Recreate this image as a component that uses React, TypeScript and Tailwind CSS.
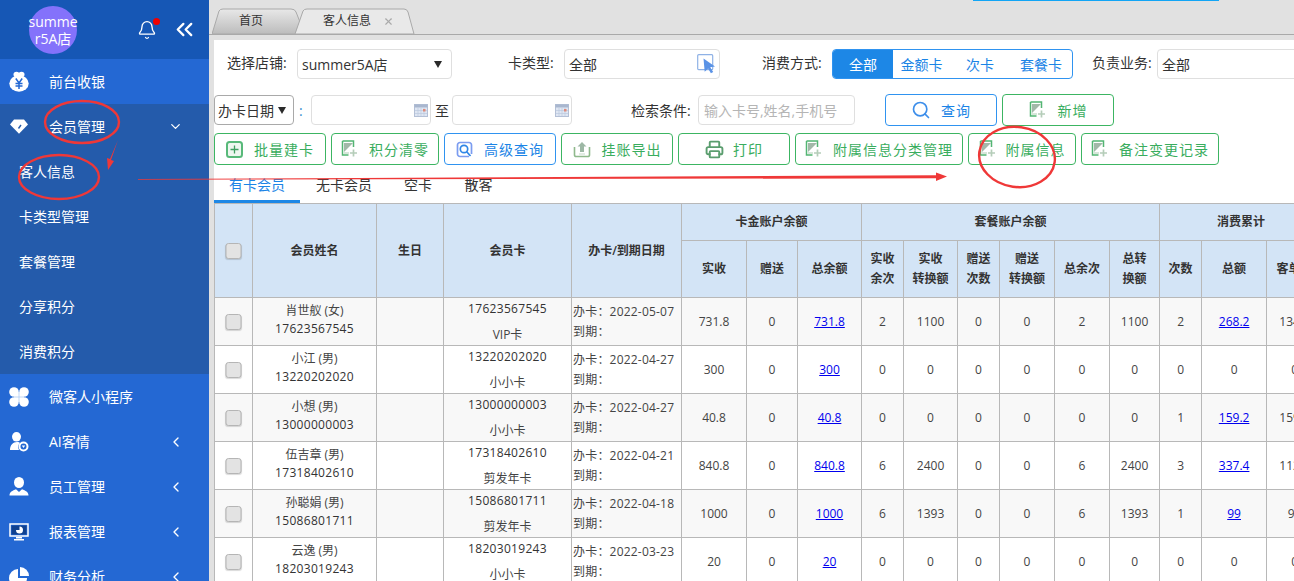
import React from "react";
import { Search, Printer, X, ChevronDown, ChevronLeft, Bell, ChevronsLeft } from "lucide-react";

const font = "font-['Open_Sans','Noto_Sans_CJK_SC',sans-serif]";

function DocPlus() {
  return (
    <svg width="17" height="18" viewBox="0 0 17 18" className="shrink-0">
      <path d="M1.500 1h11v6M1.500 1v14h6" fill="none" stroke="#53b573" strokeWidth="1.500" />
      <path d="M3 3h9L3 12z" fill="#a3b8a9" />
      <path d="M3 12v2h5v-2z" fill="#d7e6da" />
      <path d="M12.500 9.500v7M9 13h7" stroke="#b5cdb9" strokeWidth="1.700" />
    </svg>
  );
}

function PlusBox() {
  return (
    <svg width="17" height="17" viewBox="0 0 17 17" className="shrink-0">
      <rect x="1" y="1" width="15" height="15" rx="2.500" fill="#eef7f0" stroke="#58b97a" strokeWidth="2" />
      <path d="M8.500 4.500v8M4.500 8.500h8" stroke="#3f9e60" strokeWidth="1.300" />
    </svg>
  );
}

function Query() {
  return (
    <svg width="17" height="17" viewBox="0 0 17 17" className="shrink-0">
      <path d="M13 15.500H4A2.500 2.500 0 0 1 1.500 13V4A2.500 2.500 0 0 1 4 1.500h9A2.500 2.500 0 0 1 15.500 4v9" fill="none" stroke="#7b9cf0" strokeWidth="1.700" />
      <circle cx="8" cy="8" r="3.700" fill="none" stroke="#2f86e6" strokeWidth="1.700" />
      <path d="M10.500 10.500l4 4.500" stroke="#2f86e6" strokeWidth="1.700" />
    </svg>
  );
}

function Upload() {
  return (
    <svg width="18" height="17" viewBox="0 0 18 17" className="shrink-0">
      <path d="M1.500 6v8a1.500 1.500 0 0 0 1.500 1.500h12a1.500 1.500 0 0 0 1.500-1.500V6" fill="none" stroke="#8fb98c" strokeWidth="1.600" />
      <path d="M9 1l4.500 4.500h-2.500v5.500H7V5.500H4.500z" fill="#9db8a5" />
      <path d="M6 13h6" stroke="#cfe0d2" strokeWidth="1.200" />
    </svg>
  );
}

function Calico() {
  return (
    <svg width="14" height="13" viewBox="0 0 14 13" className="shrink-0">
      <rect x="0.500" y="0.500" width="13" height="12" fill="#dfe6f3" stroke="#b4c0d6" />
      <rect x="0.500" y="0.500" width="13" height="3" fill="#a9b7cf" />
      <path d="M4 4v8M7 4v8M10 4v8M1 6.500h12M1 9.500h12" stroke="#bcc8de" strokeWidth="0.700" />
      <rect x="9" y="5" width="2.500" height="2.500" fill="#e08a7a" />
    </svg>
  );
}

function Pick() {
  return (
    <svg width="19" height="20" viewBox="0 0 19 20" className="shrink-0">
      <rect x="0.700" y="0.700" width="15" height="15" rx="1" fill="#fff" stroke="#8fb2e6" strokeWidth="1.200" />
      <path d="M6.500 4.500L18 12.500l-4.800.8 3 4.700-2.300 1.300-2.800-4.800-3.400 3.200z" fill="#5b93e6" />
    </svg>
  );
}

function Tri() {
  return (
    <svg width="8" height="7" viewBox="0 0 8 7" className="shrink-0"><path d="M0 0h8L4 7z" fill="#2a2a2a" /></svg>
  );
}

function Btn({ w, blue, icon, children, sp = "gap-[11px]" }: { w: string; blue?: boolean; icon: React.ReactNode; children: React.ReactNode; sp?: string }) {
  return (
    <div className={`${w} h-[32px] shrink-0 flex items-center justify-center ${sp} rounded-[4px] border ${blue ? "border-[#2f93f0] text-[#1b84e6]" : "border-[#3cb562] text-[#39ad5e]"} text-[14px] tracking-[1px] bg-white`}>
      {icon}
      <span>{children}</span>
    </div>
  );
}

function MoneyIcon() {
  return (
    <svg width="20" height="21" viewBox="0 0 20 21">
      <ellipse cx="10" cy="12.500" rx="9.700" ry="8.300" fill="#fff" />
      <ellipse cx="7.500" cy="3.500" rx="3" ry="2.700" fill="#fff" />
      <ellipse cx="12.500" cy="3.500" rx="3" ry="2.700" fill="#fff" />
      <path d="M6.800 7.500L10 12l3.200-4.500M6.500 12.500h7M6.500 15h7M10 12v6" stroke="#2468d3" strokeWidth="1.500" fill="none" />
    </svg>
  );
}
function DiamondIcon() {
  return (
    <svg width="20" height="17" viewBox="0 0 20 17"><path d="M5 1.500h10L19 6.500 10 15.800 1 6.500z" fill="#fff" /><path d="M12 7L9.500 10.500" stroke="#245bab" strokeWidth="1.400" /></svg>
  );
}
function CloverIcon() {
  return (
    <svg width="20" height="20" viewBox="0 0 20 20" fill="#fff">
      <circle cx="5" cy="5" r="4.800" /><circle cx="15" cy="5" r="4.800" /><circle cx="5" cy="15" r="4.800" /><circle cx="15" cy="15" r="4.800" />
      <rect x="5" y="5" width="10" height="10" />
      <path d="M10 3v14M3 10h14" stroke="#a8c6f0" strokeWidth="0.700" />
    </svg>
  );
}
function UserGearIcon() {
  return (
    <svg width="20" height="20" viewBox="0 0 20 20">
      <ellipse cx="7.500" cy="4.800" rx="4.500" ry="4.800" fill="#fff" />
      <path d="M1 18c0-5 3-8 7-8 1.500 0 3 .5 3 1-2 1.500-2.500 4.500-1 7z" fill="#fff" />
      <circle cx="14.500" cy="14.500" r="4" fill="none" stroke="#fff" strokeWidth="2" />
      <path d="M12.800 13.500h3.400L14.500 16z" fill="#fff" />
    </svg>
  );
}
function UserIcon() {
  return (
    <svg width="20" height="19" viewBox="0 0 20 19">
      <ellipse cx="10" cy="5.500" rx="5" ry="5.500" fill="#fff" />
      <path d="M0.500 18.500c0-3.500 3-5 6.500-6.300L10 15l3-2.800c3.500 1.300 6.500 2.800 6.500 6.300z" fill="#fff" />
    </svg>
  );
}
function MonitorIcon() {
  return (
    <svg width="20" height="18" viewBox="0 0 20 18">
      <rect x="1" y="1" width="18" height="12" fill="none" stroke="#fff" strokeWidth="1.500" />
      <rect x="2.500" y="2.500" width="15" height="9" fill="#10418f" />
      <path d="M10.500 3.500a3.500 3.500 0 1 1-3.500 3.500h3.500z" fill="#fff" />
      <rect x="7" y="14" width="6" height="1.500" fill="#fff" />
      <rect x="5" y="16" width="10" height="1.500" fill="#fff" />
    </svg>
  );
}
function PieIcon() {
  return (
    <svg width="20" height="20" viewBox="0 0 20 20" fill="#fff"><path d="M9 2a9 9 0 1 0 9 9H9z" /><path d="M11 0a9 9 0 0 1 9 9h-9z" /></svg>
  );
}

function MenuRow({ icon, label, chev }: { icon: React.ReactNode; label: string; chev?: "down" | "left" }) {
  return (
    <div className="h-[45px] shrink-0 flex items-center text-white text-[14px]">
      <div className="w-[49px] pl-[9px] shrink-0 flex items-center">{icon}</div>
      <span className="flex-1">{label}</span>
      <div className="w-[41px] shrink-0">
        {chev === "down" && <ChevronDown size={15} strokeWidth={2} />}
        {chev === "left" && <ChevronLeft size={16} strokeWidth={2} />}
      </div>
    </div>
  );
}

function Sub({ label }: { label: string }) {
  return <div className="h-[45px] pl-[19px] flex items-center text-white text-[14px]">{label}</div>;
}

type Row = {
  name: string; phone: string; card: string; date: string;
  a: string; c: string; p: string[]; n: string; t: string; u: string;
};
const rows: Row[] = [
  { name: "肖世舣 (女)", phone: "17623567545", card: "VIP卡", date: "2022-05-07", a: "731.8", c: "731.8", p: ["2", "1100", "0", "0", "2", "1100"], n: "2", t: "268.2", u: "134.1" },
  { name: "小江 (男)", phone: "13220202020", card: "小小卡", date: "2022-04-27", a: "300", c: "300", p: ["0", "0", "0", "0", "0", "0"], n: "0", t: "0", u: "0" },
  { name: "小想 (男)", phone: "13000000003", card: "小小卡", date: "2022-04-27", a: "40.8", c: "40.8", p: ["0", "0", "0", "0", "0", "0"], n: "1", t: "159.2", u: "159.2" },
  { name: "伍吉章 (男)", phone: "17318402610", card: "剪发年卡", date: "2022-04-21", a: "840.8", c: "840.8", p: ["6", "2400", "0", "0", "6", "2400"], n: "3", t: "337.4", u: "112.4" },
  { name: "孙聪娟 (男)", phone: "15086801711", card: "剪发年卡", date: "2022-04-18", a: "1000", c: "1000", p: ["6", "1393", "0", "0", "6", "1393"], n: "1", t: "99", u: "99" },
  { name: "云逸 (男)", phone: "18203019243", card: "小小卡", date: "2022-03-23", a: "20", c: "20", p: ["0", "0", "0", "0", "0", "0"], n: "0", t: "0", u: "0" },
];

const cols = [38, 124, 67, 128, 110, 65, 51, 64, 42, 54, 42, 55, 55, 50, 42, 65, 56];
const bd = "border border-[#b8b8b8]";
const th = `${bd} font-semibold text-[12px] text-[#333] leading-[20px] p-0 text-center align-middle`;
const td = `${bd} p-0 text-center align-middle text-[12px] text-[#444]`;

function Check() {
  return <div className="w-[16px] h-[16px] mx-auto -translate-x-[0.5px] rounded-[3px] border border-[#b5b5b5] bg-[#e3e3e3] shadow-[0_1px_1px_rgba(0,0,0,0.15)]" />;
}

function Input({ w, children, cls = "" }: { w: string; children?: React.ReactNode; cls?: string }) {
  return <div className={`${w} h-[30px] shrink-0 rounded-[4px] border border-[#dfdfdf] flex items-center bg-white text-[14px] text-[#333] ${cls}`}>{children}</div>;
}

export default function App() {
  return (
    <div className={`${font} relative w-[1294px] h-[581px] overflow-hidden flex bg-[#e1e1e1]`}>
      <aside className="w-[209px] shrink-0 bg-[#2468d3] flex flex-col overflow-hidden">
        <div className="h-[59px] shrink-0 bg-[#1657b5] flex items-center">
          <div className="w-[48px] h-[48px] ml-[29px] shrink-0 rounded-full bg-[#8472fb] text-white text-[14px] leading-[17px] text-center flex flex-col items-center justify-center whitespace-nowrap">
            <span>summe</span>
            <span>r5A店</span>
          </div>
          <div className="relative ml-[60px] text-white">
            <Bell size={20} strokeWidth={1.6} />
            <span className="absolute -top-[2px] right-[-3px] w-[7px] h-[7px] rounded-full bg-[#f00000]" />
          </div>
          <ChevronsLeft size={27} strokeWidth={2} className="ml-[14px] text-white" />
        </div>
        <MenuRow icon={<MoneyIcon />} label="前台收银" />
        <div className="bg-[#245bab] shrink-0">
          <MenuRow icon={<DiamondIcon />} label="会员管理" chev="down" />
          <Sub label="客人信息" />
          <Sub label="卡类型管理" />
          <Sub label="套餐管理" />
          <Sub label="分享积分" />
          <Sub label="消费积分" />
        </div>
        <MenuRow icon={<CloverIcon />} label="微客人小程序" />
        <MenuRow icon={<UserGearIcon />} label="AI客情" chev="left" />
        <MenuRow icon={<UserIcon />} label="员工管理" chev="left" />
        <MenuRow icon={<MonitorIcon />} label="报表管理" chev="left" />
        <MenuRow icon={<PieIcon />} label="财务分析" chev="left" />
      </aside>

      <main className="flex-1 min-w-0 flex flex-col">
        <div className="h-[35px] shrink-0 border-b border-[#a9a9a9] flex items-end pl-[3px]">
          <div className="relative w-[88px] h-[26px] pr-[10px] flex items-center justify-center text-[12px] text-[#333]">
            <svg className="absolute inset-0" width="88" height="26" viewBox="0 0 88 26">
              <defs><linearGradient id="t1" x1="0" y1="0" x2="0" y2="1"><stop offset="0" stopColor="#e8e8e8" /><stop offset="1" stopColor="#bcbcbc" /></linearGradient></defs>
              <path d="M0 26 L7 3 Q8 1 11 1 H79 Q83 1 84 4 L88 14 L83 26 Z" fill="url(#t1)" stroke="#a9a9a9" />
            </svg>
            <span className="relative">首页</span>
          </div>
          <div className="relative w-[120px] h-[26px] -ml-[5px] flex items-center text-[12px] text-[#333]">
            <svg className="absolute inset-0" width="120" height="26" viewBox="0 0 120 26">
              <path d="M0 26 L8 3 Q9 1 12 1 H109 Q112 1 113 4 L119 26 Z" fill="#e9e9e9" stroke="#a9a9a9" />
            </svg>
            <span className="relative ml-[28px]">客人信息</span>
            <X size={11} strokeWidth={2.5} className="relative ml-[12px] text-[#aaa]" />
          </div>
        </div>
        <div className="h-[5px] shrink-0" />
        <div className="flex-1 min-h-0 ml-[5px] bg-white flex flex-col overflow-hidden text-[14px] text-[#333]">
          <div className="h-[30px] mt-[9px] flex items-center shrink-0">
            <span className="ml-[13px] w-[70px] shrink-0 whitespace-nowrap -mt-[3px]">选择店铺:</span>
            <Input w="w-[155px]" cls="pl-[4px] justify-between pr-[9px]">
              <span>summer5A店</span>
              <Tri />
            </Input>
            <span className="ml-[56px] w-[56px] shrink-0 whitespace-nowrap -mt-[3px]">卡类型:</span>
            <Input w="w-[156px]" cls="pl-[4px] justify-between pr-[3px]">
              <span>全部</span>
              <Pick />
            </Input>
            <span className="ml-[42px] w-[70px] shrink-0 whitespace-nowrap -mt-[3px]">消费方式:</span>
            <div className="w-[241px] h-[30px] shrink-0 rounded-[4px] border border-[#2f93f0] flex items-center text-[#1b84e6] overflow-hidden">
              <div className="w-[60px] h-full bg-[#1d87e6] text-white flex items-center justify-center">全部</div>
              <div className="w-[57px] text-center">金额卡</div>
              <div className="w-[60px] text-center">次卡</div>
              <div className="w-[62px] text-center">套餐卡</div>
            </div>
            <span className="ml-[19px] w-[65px] shrink-0 whitespace-nowrap -mt-[3px]">负责业务:</span>
            <Input w="w-[200px]" cls="pl-[4px]"><span>全部</span></Input>
          </div>
          <div className="h-[32px] mt-[15px] flex items-center shrink-0">
            <div className="w-[80px] h-[30px] shrink-0 rounded-[4px] border border-[#a9a9a9] flex items-center justify-between pl-[3px] pr-[7px]">
              <span>办卡日期</span><Tri />
            </div>
            <span className="ml-[5px] w-[12px] text-[#3a8fd0] shrink-0">:</span>
            <Input w="w-[120px]" cls="justify-end pr-[2px]"><Calico /></Input>
            <span className="w-[21px] pl-[4px] shrink-0">至</span>
            <Input w="w-[120px]" cls="justify-end pr-[2px]"><Calico /></Input>
            <span className="ml-[59px] w-[67px] shrink-0 whitespace-nowrap">检索条件:</span>
            <Input w="w-[157px]" cls="pl-[5px] text-[#b5b5b5] whitespace-nowrap">输入卡号,姓名,手机号</Input>
            <div className="ml-[30px] flex gap-[5px]">
              <Btn w="w-[112px]" blue icon={<Search size={20} strokeWidth={2} className="text-[#3d8eea]" />} sp="gap-[10px]">查询</Btn>
              <Btn w="w-[112px]" icon={<DocPlus />} sp="gap-[12px]">新增</Btn>
            </div>
          </div>
          <div className="mt-[7px] flex gap-[5px] shrink-0">
            <Btn w="w-[112px]" icon={<PlusBox />}>批量建卡</Btn>
            <Btn w="w-[108px]" icon={<DocPlus />}>积分清零</Btn>
            <Btn w="w-[112px]" blue icon={<Query />}>高级查询</Btn>
            <Btn w="w-[112px]" icon={<Upload />}>挂账导出</Btn>
            <Btn w="w-[112px]" icon={<Printer size={19} strokeWidth={2.4} className="text-[#5a9d6e]" />} sp="gap-[9px]">打印</Btn>
            <Btn w="w-[168px]" icon={<DocPlus />}>附属信息分类管理</Btn>
            <Btn w="w-[108px]" icon={<DocPlus />} sp="gap-[10px]">附属信息</Btn>
            <Btn w="w-[138px]" icon={<DocPlus />}>备注变更记录</Btn>
          </div>
          <div className="h-[28px] mt-[10px] flex shrink-0 text-[14px] leading-[20px]">
            <div className="w-[86px] text-center border-b-[3px] border-[#1d87e6] text-[#1b84e6]">有卡会员</div>
            <div className="w-[88px] text-center">无卡会员</div>
            <div className="w-[60px] text-center">空卡</div>
            <div className="w-[61px] text-center">散客</div>
          </div>
          <div className="mt-0">
            <table className="table-fixed border-collapse w-[1108px]">
              <colgroup>
                {cols.map((c, i) => <col key={i} style={{ width: c }} />)}
              </colgroup>
              <thead className="bg-[#d3e4f6]">
                <tr className="h-[37px]">
                  <th rowSpan={2} className={th}><Check /></th>
                  <th rowSpan={2} className={th}>会员姓名</th>
                  <th rowSpan={2} className={th}>生日</th>
                  <th rowSpan={2} className={th}>会员卡</th>
                  <th rowSpan={2} className={th}>办卡/到期日期</th>
                  <th colSpan={3} className={th}>卡金账户余额</th>
                  <th colSpan={6} className={th}>套餐账户余额</th>
                  <th colSpan={3} className={th}>消费累计</th>
                </tr>
                <tr className="h-[57px]">
                  <th className={th}>实收</th>
                  <th className={th}>赠送</th>
                  <th className={th}>总余额</th>
                  <th className={th}>实收<br />余次</th>
                  <th className={th}>实收<br />转换额</th>
                  <th className={th}>赠送<br />次数</th>
                  <th className={th}>赠送<br />转换额</th>
                  <th className={th}>总余次</th>
                  <th className={th}>总转<br />换额</th>
                  <th className={th}>次数</th>
                  <th className={th}>总额</th>
                  <th className={th}>客单价</th>
                </tr>
              </thead>
              <tbody>
                {rows.map((r, i) => (
                  <tr key={i} className={`h-[48px] ${i % 2 === 0 ? "bg-[#f8f8f8]" : "bg-white"}`}>
                    <td className={td}><Check /></td>
                    <td className={`${td} leading-[18px]`}>
                      <div className="-translate-y-[2px]">
                        <div>{r.name}</div>
                        <div className="tracking-[0.3px] text-[#333]">{r.phone}</div>
                      </div>
                    </td>
                    <td className={td}></td>
                    <td className={td}>
                      <div className="tracking-[0.3px] text-[#333] leading-[18px] -mt-[5px]">{r.phone}</div>
                      <div className="leading-[18px] mt-[8px] -mb-[5px]">{r.card}</div>
                    </td>
                    <td className={`${td} text-left pl-[1px] leading-[20px] tracking-[0.2px]`}>
                      <div>办卡：{r.date}</div>
                      <div>到期：</div>
                    </td>
                    <td className={td}>{r.a}</td>
                    <td className={td}>0</td>
                    <td className={td}><a className="text-[#0000ee] underline">{r.c}</a></td>
                    {r.p.map((v, j) => <td key={j} className={td}>{v}</td>)}
                    <td className={td}>{r.n}</td>
                    <td className={td}>{r.t === "0" ? "0" : <a className="text-[#0000ee] underline">{r.t}</a>}</td>
                    <td className={td}>{r.u}</td>
                  </tr>
                ))}
              </tbody>
            </table>
          </div>
        </div>
      </main>

      <div className="absolute left-[973px] top-0 w-[246px] h-[1px] bg-[#12a5f5]" />
      <svg className="absolute inset-0 pointer-events-none" width="1294" height="581" viewBox="0 0 1294 581">
        <g fill="none" stroke="#ef3838">
          <ellipse cx="82" cy="122" rx="37" ry="21" strokeWidth="2.400" />
          <ellipse cx="59" cy="177" rx="40" ry="22" strokeWidth="2.400" />
          <ellipse cx="1017" cy="157" rx="38" ry="30" strokeWidth="2.400" transform="rotate(8 1017 157)" />
        </g>
        <path d="M138 179L936 175.300L936 178.300L138 179.800z" fill="#ef3838" />
        <path d="M936 172.500L947 176.500L936 181z" fill="#ef3838" />
        <path d="M118 140L111 160L114 161L108 170L107 158L110 159z" fill="#ef3838" />
      </svg>
    </div>
  );
}
